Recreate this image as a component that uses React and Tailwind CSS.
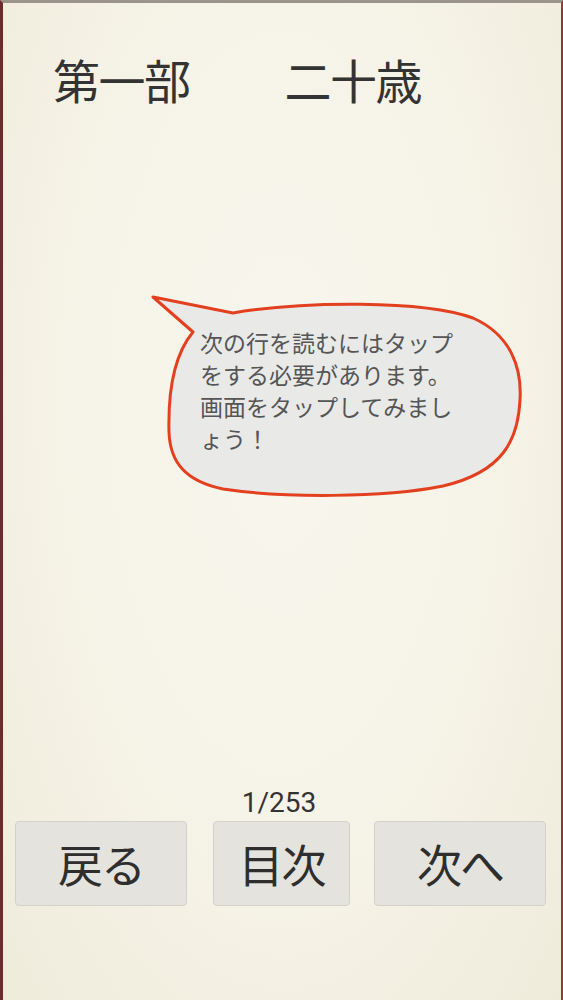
// Reading screen: chapter heading, tutorial speech bubble, page counter and nav buttons
const JP = { fontFamily: '"Noto Sans CJK JP", "Noto Sans", sans-serif' }

const HINT_LINES = [
  '次の行を読むにはタップ',
  'をする必要があります。',
  '画面をタップしてみまし',
  'ょう！',
]

function SpeechBubble() {
  return (
    <div className="relative ml-[145px] h-[210px] w-[380px]">
      <svg
        className="absolute inset-0"
        width="380"
        height="210"
        viewBox="145 292 380 210"
      >
        <path
          d="M 230 313 C 300 301, 420 300, 470 318 C 508 335, 519 368, 517 400 C 515 440, 500 472, 440 486 C 380 498, 280 498, 220 489 C 182 481, 167 462, 166 432 C 165 392, 170 356, 190 332 L 150 297 Z"
          fill="#e9e9e8"
          stroke="#e3401f"
          strokeWidth="3"
          strokeLinejoin="round"
        />
      </svg>
      <div
        className="relative pl-[52px] pt-[34px] text-[23px] leading-[32px] text-[#555]"
        style={JP}
      >
        {HINT_LINES.map((line, i) => (
          <div key={i} className="whitespace-nowrap">
            {line}
          </div>
        ))}
      </div>
    </div>
  )
}

function NavButton({ label, className }) {
  return (
    <button
      className={`flex h-[85px] items-center justify-center rounded-[4px] border border-[#d3d1ca] bg-[#e4e3de] text-[45px] leading-none tracking-[-2px] text-[#2e2e2e] ${className}`}
      style={JP}
    >
      {label}
    </button>
  )
}

export default function App() {
  return (
    <div className="h-[1000px] w-full overflow-hidden border-t-[3px] border-l-[3px] border-r-[2px] border-t-[#9a948c] border-l-[#6e2a2c] border-r-[#8a3a32] bg-[radial-gradient(ellipse_at_50%_40%,#f9f7ee_0%,#f5f2e6_60%,#efebdb_100%)]">
      {/* chapter heading */}
      <div
        className="flex pl-[50px] pt-[52px] text-[47px] leading-none tracking-[-1.5px] text-[#333]"
        style={JP}
      >
        <span>第一部</span>
        <span className="ml-[95px]">二十歳</span>
      </div>

      <div className="mt-[190px]">
        <SpeechBubble />
      </div>

      {/* page counter */}
      <div className="mt-[287px] pr-[6px] text-center text-[28px] leading-none text-[#333] [font-family:Roboto,sans-serif]">
        1/253
      </div>

      <div className="mt-[4px] flex pl-[12px]">
        <NavButton label="戻る" className="w-[172px]" />
        <NavButton label="目次" className="ml-[26px] w-[137px]" />
        <NavButton label="次へ" className="ml-[24px] w-[172px]" />
      </div>
    </div>
  )
}
